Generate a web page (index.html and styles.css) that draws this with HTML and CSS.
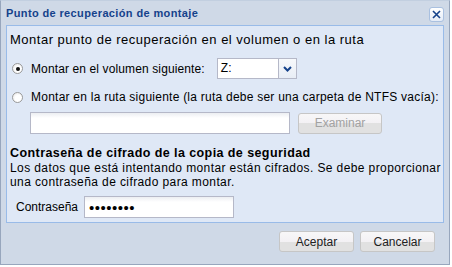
FILE: index.html
```html
<!DOCTYPE html>
<html lang="es">
<head>
    <meta charset="UTF-8">
    <title>Punto de recuperación de montaje</title>
    <link rel="stylesheet" href="styles.css">
</head>
<body>
    <div class="window">
        <div class="titlebar">
            <span class="title">Punto de recuperación de montaje</span>
            <button class="close-btn" title="Cerrar">
                <svg width="9" height="9" viewBox="0 0 9 9"><path d="M1 1L8 8M8 1L1 8" stroke="#15428b" stroke-width="1.6" fill="none"/></svg>
            </button>
        </div>

        <div class="panel">
            <h1>Montar punto de recuperación en el volumen o en la ruta</h1>

            <div class="row volume-row">
                <label class="radio"><span class="radio-dot checked"></span>Montar en el volumen siguiente:</label>
                <div class="select">
                    <span class="select-value">Z:</span>
                    <span class="select-arrow">
                        <svg width="9" height="6" viewBox="0 0 9 6"><path d="M1 1L4.5 4.5L8 1" stroke="#15428b" stroke-width="2" fill="none"/></svg>
                    </span>
                </div>
            </div>

            <div class="row path-label-row">
                <label class="radio wide"><span class="radio-dot"></span>Montar en la ruta siguiente (la ruta debe ser una carpeta de NTFS vacía):</label>
            </div>

            <div class="row path-row">
                <input type="text" class="text-input path-input">
                <button class="btn" disabled>Examinar</button>
            </div>

            <h2>Contraseña de cifrado de la copia de seguridad</h2>
            <p class="note">Los datos que está intentando montar están cifrados. Se debe proporcionar una contraseña de cifrado para montar.</p>

            <div class="row pass-row">
                <span class="field-label">Contraseña</span>
                <input type="password" class="text-input pass-input" value="12345678">
            </div>
        </div>

        <div class="footer">
            <button class="btn">Aceptar</button>
            <button class="btn">Cancelar</button>
        </div>
    </div>
</body>
</html>
```

FILE: styles.css
```css
body {
    margin: 0;
    padding: 0;
    background-color: #ffffff;
    font-family: "Liberation Sans", Arial, sans-serif;
    font-size: 12px;
    color: #000;
}
.window {
    box-sizing: border-box;
    width: 450px;
    height: 265px;
    background-color: #cfd9e7;
    border: 1px solid #97a6bd;
    border-top-color: #c2cfe0;
    padding: 0 5px;
    display: flex;
    flex-direction: column;
}
.titlebar {
    height: 24px;
    display: flex;
    align-items: center;
    justify-content: space-between;
    flex-shrink: 0;
}
.title {
    font-size: 11px;
    font-weight: bold;
    color: #15428b;
    letter-spacing: 0.37px;
}
.close-btn {
    width: 15px;
    height: 15px;
    padding: 0;
    margin-top: 2px;
    border: 1px solid #a9c0e0;
    border-radius: 3px;
    background: linear-gradient(#ffffff, #e4ecf7);
    display: flex;
    align-items: center;
    justify-content: center;
}
.panel {
    flex: 1;
    background-color: #dfe8f6;
    border: 1px solid #99bbe8;
    padding: 0 3px;
}
h1 {
    margin: 5px 0 0 0;
    font-size: 13px;
    font-weight: normal;
    line-height: 18px;
    letter-spacing: 0.5px;
}
.row {
    display: flex;
    align-items: center;
}
.volume-row {
    margin-top: 9px;
    height: 21px;
    gap: 12px;
}
.path-label-row {
    margin-top: 9px;
    height: 18px;
}
.radio {
    display: flex;
    align-items: center;
    white-space: nowrap;
    letter-spacing: 0.12px;
}
.radio.wide {
    letter-spacing: 0.24px;
}
.radio-dot {
    box-sizing: border-box;
    flex-shrink: 0;
    width: 11px;
    height: 11px;
    margin: 0 8px 0 2px;
    border: 1px solid #9a9a9a;
    border-radius: 50%;
    background: radial-gradient(circle at 60% 60%, #ffffff 40%, #e2e2e2 100%);
    position: relative;
}
.radio-dot.checked::after {
    content: "";
    position: absolute;
    left: 2.5px;
    top: 2.5px;
    width: 4px;
    height: 4px;
    border-radius: 50%;
    background-color: #111;
}
.select {
    box-sizing: border-box;
    width: 80px;
    height: 21px;
    display: flex;
    background-color: #fff;
    border: 1px solid #b5b8c8;
}
.select-value {
    flex: 1;
    padding-left: 3px;
    line-height: 19px;
}
.select-arrow {
    width: 17px;
    border-left: 1px solid #b5b8c8;
    background: linear-gradient(#f7f9fc, #e8edf5);
    display: flex;
    align-items: center;
    justify-content: center;
}
.path-row {
    margin-top: 6px;
    margin-left: 20px;
    gap: 8px;
}
.text-input {
    box-sizing: border-box;
    height: 22px;
    border: 1px solid #b5b8c8;
    background: linear-gradient(#eceef2, #ffffff 5px);
    padding: 0 4px;
    font-family: "Liberation Sans", Arial, sans-serif;
    outline: none;
}
.path-input {
    width: 260px;
}
.btn {
    box-sizing: border-box;
    width: 75px;
    height: 21px;
    padding: 0;
    border: 1px solid #c6c6c6;
    border-radius: 3px;
    background: linear-gradient(#f8f7f8 0, #f3f1f4 50%, #e1e1e1 50%, #e1e1e1 100%);
    font-family: "Liberation Sans", Arial, sans-serif;
    font-size: 12px;
    color: #222;
}
.path-row .btn {
    width: 84px;
}
.btn:disabled {
    color: #a2a2a2;
}
h2 {
    margin: 11px 0 0 0;
    font-size: 12.5px;
    font-weight: bold;
    line-height: 16px;
    letter-spacing: 0.42px;
}
.note {
    margin: 0;
    line-height: 14px;
    letter-spacing: 0.4px;
    width: 432px;
}
.pass-row {
    margin-top: 7px;
    margin-left: 6px;
    gap: 6px;
}
.field-label {
    letter-spacing: 0;
}
.pass-input {
    width: 150px;
    font-size: 15px;
    letter-spacing: 0.5px;
}
.footer {
    height: 41px;
    flex-shrink: 0;
    display: flex;
    justify-content: flex-end;
    align-items: flex-start;
    padding: 8px 9px 0 0;
    gap: 6px;
    box-sizing: border-box;
}
```
